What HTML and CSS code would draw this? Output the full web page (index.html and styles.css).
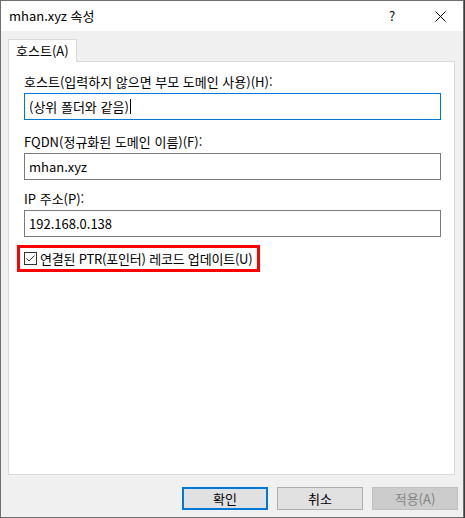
FILE: index.html
```html
<!DOCTYPE html>
<html lang="ko">
<head>
<meta charset="utf-8">
<link rel="stylesheet" href="styles.css">
</head>
<body>
<div class="window">
  <div class="titlebar">
    <span class="title">mhan.xyz 속성</span>
    <span class="help">?</span>
    <span class="close">
      <svg width="11" height="11" viewBox="0 0 11 11"><path d="M0.5 0.5L10.5 10.5M10.5 0.5L0.5 10.5" stroke="#000" stroke-width="1" fill="none"/></svg>
    </span>
  </div>
  <div class="client">
    <div class="tabs">
      <div class="tab">호스트(A)</div>
    </div>
    <div class="panel">
      <div class="label">호스트(입력하지 않으면 부모 도메인 사용)(H):</div>
      <div class="input focused"><span>(상위 폴더와 같음)</span><span class="caret"></span></div>
      <div class="label">FQDN(정규화된 도메인 이름)(F):</div>
      <div class="input tight">mhan.xyz</div>
      <div class="label">IP 주소(P):</div>
      <div class="input">192.168.0.138</div>
      <div class="highlight">
        <span class="checkbox">
          <svg width="13" height="13" viewBox="0 0 13 13"><rect x="0.5" y="0.5" width="12" height="12" fill="#fff" stroke="#333"/><path d="M2.5 6.5L5 9L10.5 3.5" stroke="#333" stroke-width="1" fill="none"/></svg>
        </span>
        <span class="cblabel">연결된 PTR(포인터) 레코드 업데이트(U)</span>
      </div>
    </div>
    <div class="footer">
      <div class="btn default">확인</div>
      <div class="btn">취소</div>
      <div class="btn disabled">적용(A)</div>
    </div>
  </div>
</div>
</body>
</html>
```
FILE: styles.css
```css
html, body {
  margin: 0;
  padding: 0;
  background: #3c3c3c;
}
body {
  font-family: "Noto Sans CJK KR", "Liberation Sans", sans-serif;
  font-size: 13px;
  color: #000;
}
.window {
  width: 464px;
  height: 518px;
  box-sizing: border-box;
  border: 1px solid #6f6f6f;
  display: flex;
  flex-direction: column;
  background: #f0f0f0;
}
.titlebar {
  height: 30px;
  background: #fff;
  display: flex;
  align-items: center;
  flex-shrink: 0;
}
.title {
  margin-left: 8px;
  flex: 1;
  line-height: 16px;
}
.help {
  width: 10px;
  margin-right: 36px;
  line-height: 16px;
}
.close {
  width: 11px;
  height: 11px;
  margin-right: 17px;
  display: flex;
}
.client {
  flex: 1;
  display: flex;
  flex-direction: column;
  padding: 8px 8px 0 7px;
}
.tabs {
  display: flex;
  height: 22px;
  position: relative;
  z-index: 1;
}
.tab {
  border: 1px solid #d9d9d9;
  border-bottom: none;
  background: #fff;
  padding: 0 7px;
  height: 23px;
  box-sizing: border-box;
  display: flex;
  align-items: center;
  width: 69px;
  line-height: 16px;
  white-space: nowrap;
}
.panel {
  background: #fff;
  border: 1px solid #d9d9d9;
  height: 414px;
  box-sizing: border-box;
  padding: 12px 13px 0 15px;
  display: flex;
  flex-direction: column;
}
.label {
  height: 16px;
  line-height: 16px;
  margin-bottom: 3px;
  white-space: nowrap;
}
.input {
  height: 27px;
  box-sizing: border-box;
  border: 1px solid #7a7a7a;
  padding: 0 4px;
  display: flex;
  align-items: center;
  margin-bottom: 14px;
  line-height: 16px;
}
.input.tight {
  margin-bottom: 11px;
}
.input.focused {
  border-color: #0078d7;
}
.caret {
  width: 1px;
  height: 15px;
  background: #000;
  margin-left: 1px;
}
.highlight {
  align-self: flex-start;
  margin-left: -7px;
  margin-top: -6px;
  border: 3px solid #ff0000;
  height: 27px;
  width: 243px;
  box-sizing: border-box;
  display: flex;
  align-items: center;
  padding-left: 4px;
  line-height: 16px;
  white-space: nowrap;
}
.checkbox {
  display: flex;
  margin-right: 3px;
  flex-shrink: 0;
}
.cblabel {
  letter-spacing: -0.2px;
}
.footer {
  display: flex;
  justify-content: flex-end;
  gap: 9px;
  padding-top: 12px;
  margin-right: -3px;
}
.btn {
  width: 86px;
  height: 23px;
  box-sizing: border-box;
  border: 1px solid #adadad;
  background: #e1e1e1;
  display: flex;
  align-items: center;
  justify-content: center;
  line-height: 16px;
}
.btn.default {
  border: 2px solid #0078d7;
}
.btn.disabled {
  background: #cccccc;
  border-color: #bfbfbf;
  color: #838383;
}
```
